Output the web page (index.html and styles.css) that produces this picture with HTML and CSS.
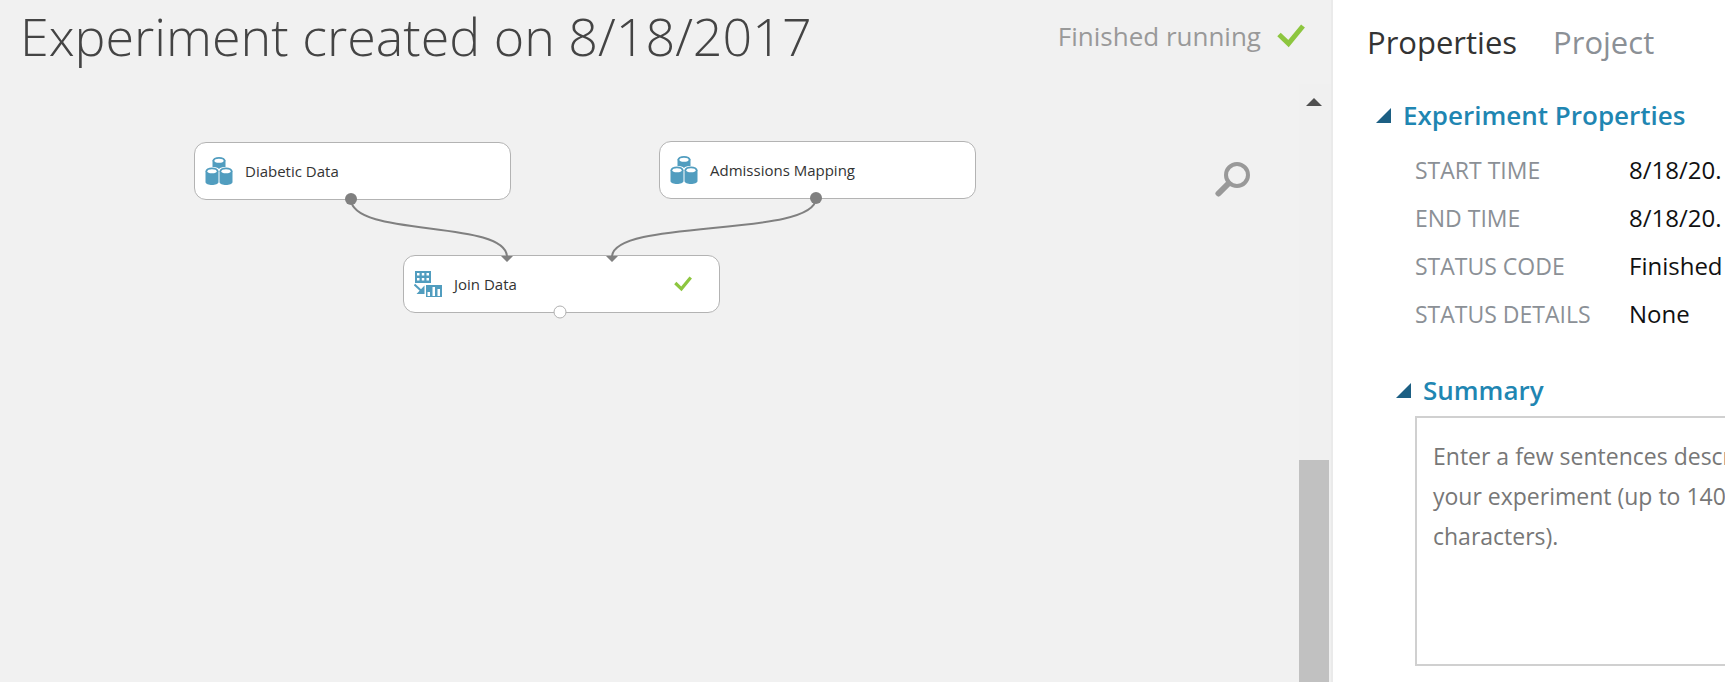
FILE: index.html
```html
<!DOCTYPE html>
<html lang="en">
<head>
<meta charset="utf-8">
<title>Experiment created on 8/18/2017</title>
<link rel="stylesheet" href="styles.css">
</head>
<body>
<svg class="sprite" aria-hidden="true">
  <symbol id="dataset" viewBox="0 0 28 28">
    <path fill="#519dbf" d="M7.500 3.500v6.500c3 0 5.200 .6 6.500 2 1.300-1.400 3.500-2 6.500-2V3.500z"/>
    <ellipse cx="14" cy="3.500" rx="6.500" ry="3.500" fill="#519dbf"/>
    <ellipse cx="14" cy="3.800" rx="4.600" ry="2" fill="#fff"/>
    <path fill="#519dbf" d="M.5 14v11c0 4 13 4 13 0V14zM14.500 14v11c0 4 13 4 13 0V14z"/>
    <ellipse cx="7" cy="14" rx="6.500" ry="3.500" fill="#519dbf"/>
    <ellipse cx="21" cy="14" rx="6.500" ry="3.500" fill="#519dbf"/>
    <ellipse cx="7" cy="14.200" rx="4.600" ry="2" fill="#fff"/>
    <ellipse cx="21" cy="14.200" rx="4.600" ry="2" fill="#fff"/>
  </symbol>
  <symbol id="join" viewBox="0 0 28 28">
    <path fill="#519dbf" d="M1 1h16v12H1z"/>
    <path fill="#fff" d="M3 3h2.500v2.500H3zM7.800 3h2.500v2.500H7.800zM12.500 3H15v2.500h-2.500zM3 8h2.500v2.500H3zM7.800 8h2.500v2.500H7.800zM12.500 8H15v2.500h-2.500z"/>
    <path fill="none" stroke="#519dbf" stroke-width="2" d="M.5 14.500l7.500 7"/>
    <path fill="#519dbf" d="M10.500 15.500V24H2.500zM12 15h16v12H12z"/>
    <path fill="#fff" d="M13.500 22H16v4h-2.500zM18.500 17H21v9h-2.500zM23.500 19H26v7h-2.500z"/>
  </symbol>
  <symbol id="check" viewBox="0 0 28 24">
    <path fill="none" stroke="#8dc63f" stroke-width="5" d="M2 10.500l9.500 9L26 2"/>
  </symbol>
</svg>
<div class="app">
  <main class="workspace">
    <header class="topbar">
      <h1 class="title">Experiment created on 8/18/2017</h1>
      <div class="status">Finished running <svg class="status-icon" aria-hidden="true"><use href="#check"/></svg></div>
    </header>
    <div class="stage">
      <div class="canvas">
        <div class="node node-diabetic"><svg class="node-icon" aria-hidden="true"><use href="#dataset"/></svg>Diabetic Data</div>
        <div class="node node-admissions"><svg class="node-icon" aria-hidden="true"><use href="#dataset"/></svg>Admissions Mapping</div>
        <div class="node node-join"><svg class="node-icon" aria-hidden="true"><use href="#join"/></svg>Join Data<svg class="node-check" aria-hidden="true"><use href="#check"/></svg></div>
        <svg class="wires" aria-hidden="true">
          <g fill="none" stroke="#808080" stroke-width="2">
            <path d="M351 115C351 154 507 135 507 173"/>
            <path d="M816 114C816 154 612 134 612 173"/>
          </g>
          <path fill="#808080" d="M501 172h12l-6 6zM606 172h12l-6 6z"/>
          <circle cx="351" cy="115" r="6" fill="#808080"/>
          <circle cx="816" cy="114" r="6" fill="#808080"/>
          <circle cx="560" cy="228" r="6" fill="#fff" stroke="#b0b0b0"/>
        </svg>
        <button class="zoom" aria-label="Zoom">
          <svg class="zoom-icon" viewBox="0 0 36 36" aria-hidden="true"><g fill="none" stroke="#999"><circle cx="22" cy="14" r="11" stroke-width="4"/><path d="M13.500 22.500L3.500 32.500" stroke-width="6" stroke-linecap="round"/></g></svg>
        </button>
      </div>
      <div class="scrollbar">
        <button class="scroll-up" aria-label="Scroll up"><svg class="scroll-arrow" viewBox="0 0 16 8" aria-hidden="true"><path fill="#505050" d="M0 8L8 0l8 8z"/></svg></button>
        <div class="scroll-thumb"></div>
      </div>
    </div>
  </main>
  <aside class="panel">
    <nav class="tabs">
      <button class="tab tab-active">Properties</button>
      <button class="tab">Project</button>
    </nav>
    <h2 class="section"><svg class="caret" viewBox="0 0 15 15" aria-hidden="true"><path fill="#1c5f83" d="M15 0v15H0z"/></svg>Experiment Properties</h2>
    <dl class="props">
      <dt>START TIME</dt><dd>8/18/20.</dd>
      <dt>END TIME</dt><dd>8/18/20.</dd>
      <dt>STATUS CODE</dt><dd>Finished</dd>
      <dt>STATUS DETAILS</dt><dd>None</dd>
    </dl>
    <h2 class="section section-sub"><svg class="caret" viewBox="0 0 15 15" aria-hidden="true"><path fill="#1c5f83" d="M15 0v15H0z"/></svg><label for="summary">Summary</label></h2>
    <textarea class="summary" id="summary" placeholder="Enter a few sentences describing your experiment (up to 140 characters)."></textarea>
  </aside>
</div>
</body>
</html>
```
FILE: styles.css
```css
* {
  box-sizing: border-box;
}

body {
  margin: 0;
  background: #f1f1f1;
  font-family: "Open Sans", "Noto Sans", sans-serif;
}

button {
  padding: 0;
  border: 0;
  background: none;
  font: inherit;
  color: inherit;
}

svg {
  flex: none;
}

.sprite {
  position: absolute;
  width: 0;
  height: 0;
}

.app {
  display: flex;
  height: 100vh;
  overflow: hidden;
}

.workspace {
  flex: 1;
  min-width: 0;
  display: flex;
  flex-direction: column;
  border-right: 2px solid #eaeaea;
}

.topbar {
  display: flex;
  justify-content: space-between;
  height: 84px;
  padding: 0 26px 0 20px;
}

.title {
  margin: 0;
  font-size: 52px;
  line-height: 72px;
  font-weight: 300;
  color: #444;
  white-space: nowrap;
}

.status {
  display: flex;
  align-items: center;
  gap: 16px;
  height: 72px;
  font-size: 26px;
  color: #999;
  white-space: nowrap;
}

.status-icon {
  width: 28px;
  height: 24px;
}

.stage {
  flex: 1;
  display: flex;
}

.canvas {
  position: relative;
  flex: 1;
}

.node {
  position: absolute;
  display: flex;
  align-items: center;
  gap: 12px;
  width: 317px;
  height: 58px;
  padding: 0 27px 0 10px;
  border: 1px solid #b3b3b3;
  border-radius: 12px;
  background: #fff;
  font-size: 15px;
  color: #333;
}

.node-diabetic {
  left: 194px;
  top: 58px;
}

.node-admissions {
  left: 659px;
  top: 57px;
}

.node-join {
  left: 403px;
  top: 171px;
}

.node-icon {
  width: 28px;
  height: 28px;
}

.node-check {
  width: 18px;
  height: 16px;
  margin-left: auto;
}

.wires {
  position: absolute;
  inset: 0;
  width: 100%;
  height: 100%;
}

.zoom {
  position: absolute;
  right: 48px;
  top: 77px;
  width: 36px;
  height: 36px;
}

.zoom-icon {
  display: block;
}

.scrollbar {
  display: flex;
  flex-direction: column;
  width: 32px;
  padding-right: 2px;
  background: #f0f0f0;
}

.scroll-up {
  display: flex;
  justify-content: center;
  height: 376px;
  padding-top: 14px;
}

.scroll-arrow {
  width: 16px;
  height: 8px;
}

.scroll-thumb {
  flex: 1;
  background: #c1c1c1;
}

.panel {
  flex: none;
  width: 392px;
  padding: 20px 0 0 34px;
  overflow: hidden;
  background: #fff;
}

.tabs {
  display: flex;
  gap: 36px;
  margin-bottom: 27px;
  font-size: 31px;
  line-height: 44px;
  color: #8b9096;
}

.tab-active {
  color: #333;
}

.section {
  display: flex;
  align-items: center;
  gap: 12px;
  margin: 0;
  padding-left: 9px;
  font-size: 26px;
  line-height: 48px;
  font-weight: 600;
  color: #1f86b2;
  white-space: nowrap;
}

.section-sub {
  padding-left: 29px;
}

.caret {
  width: 15px;
  height: 15px;
}

.props {
  display: grid;
  grid-template-columns: 214px 1fr;
  margin: 7px 0 28px;
  padding-left: 48px;
  font-size: 24px;
  line-height: 48px;
  white-space: nowrap;
}

.props dt {
  font-size: 23px;
  color: #8b9096;
}

.props dd {
  margin: 0;
  color: #111;
}

.summary {
  display: block;
  width: 410px;
  height: 250px;
  margin: 2px 0 0 48px;
  padding: 18px 16px;
  border: 2px solid #d0d0d0;
  background: #fff;
  font: 23px/40px "Open Sans", "Noto Sans", sans-serif;
  resize: none;
}

.summary::placeholder {
  color: #777;
}
```
